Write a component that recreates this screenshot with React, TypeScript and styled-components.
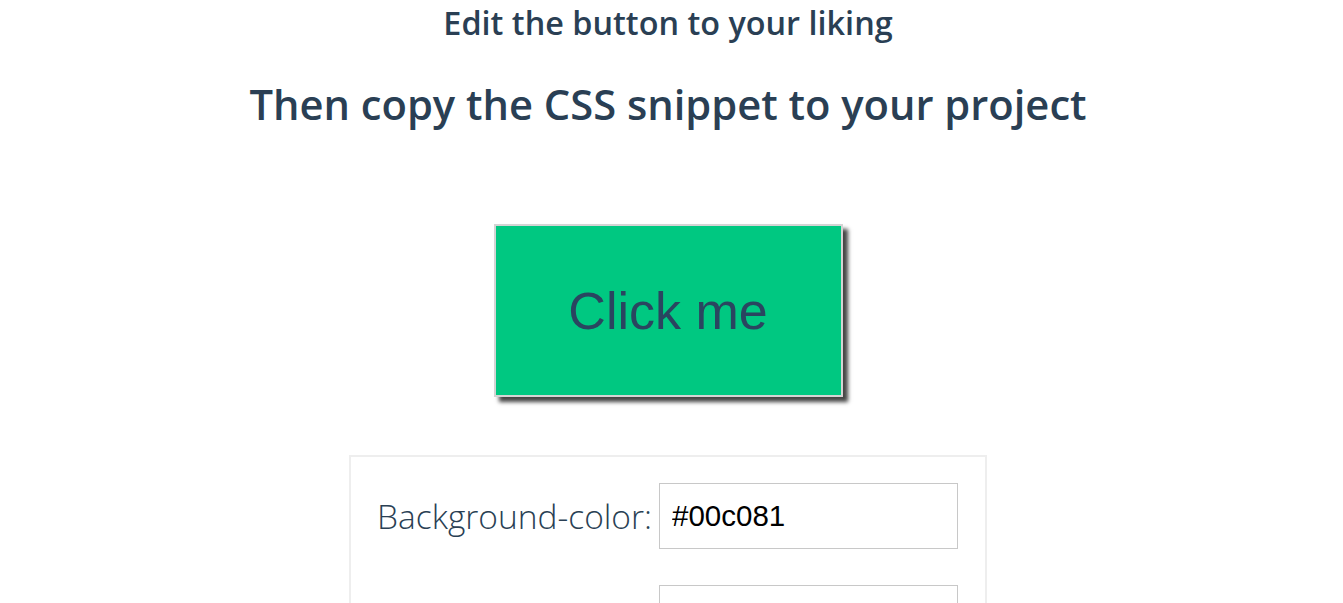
import React from "react";
import styled, { createGlobalStyle } from "styled-components";

const Global = createGlobalStyle`
  html, body { margin: 0; padding: 0; background: #fff; }
  body { font-family: "Open Sans", "Noto Sans", sans-serif; color: #2a3f54; }
`;

const Page = styled.main`
  display: flex;
  flex-direction: column;
  align-items: center;
  width: 1336px;
  height: 603px;
  overflow: hidden;
  & > * { flex-shrink: 0; }
`;

const Title = styled.h1`
  margin: 0;
  font-size: 32.4px;
  line-height: 44px;
  font-weight: 600;
  color: #2a3f54;
`;

const Subtitle = styled.h2`
  margin: 0;
  margin-top: 33px;
  font-size: 41.7px;
  line-height: 54px;
  font-weight: 600;
  color: #2a3f54;
`;

const PreviewButton = styled.button`
  margin-top: 93px;
  width: 349px;
  height: 173px;
  box-sizing: border-box;
  background: #00c881;
  border: 2px solid #d4d4d4;
  box-shadow: 5px 5px 4px #444;
  font-family: "Liberation Sans", Arial, sans-serif;
  font-size: 52px;
  color: #2a4560;
  padding: 0;
  cursor: pointer;
`;

const Panel = styled.section`
  margin-top: 58px;
  width: 638px;
  box-sizing: border-box;
  border: 2px solid #eeeeee;
  padding: 26px 26px 0 26px;
  display: flex;
  flex-direction: column;
  gap: 36px;
`;

const Row = styled.label`
  display: flex;
  align-items: center;
  gap: 8px;
`;

const LabelText = styled.span`
  width: 274px;
  flex: none;
  font-size: 33.5px;
  font-weight: 300;
  color: #2a3f54;
  text-align: right;
  white-space: nowrap;
`;

const Field = styled.input`
  width: 299px;
  height: 66px;
  box-sizing: border-box;
  border: 1px solid #c8c8c8;
  padding: 0 12px;
  font-family: "Liberation Sans", Arial, sans-serif;
  font-size: 29.5px;
  color: #000;
  outline: none;
`;

export default function App() {
  return (
    <>
      <Global />
      <Page>
        <Title>Edit the button to your liking</Title>
        <Subtitle>Then copy the CSS snippet to your project</Subtitle>
        <PreviewButton>Click me</PreviewButton>
        <Panel>
          <Row>
            <LabelText>Background-color:</LabelText>
            <Field defaultValue="#00c081" />
          </Row>
          <Row>
            <LabelText></LabelText>
            <Field defaultValue="" />
          </Row>
        </Panel>
      </Page>
    </>
  );
}
